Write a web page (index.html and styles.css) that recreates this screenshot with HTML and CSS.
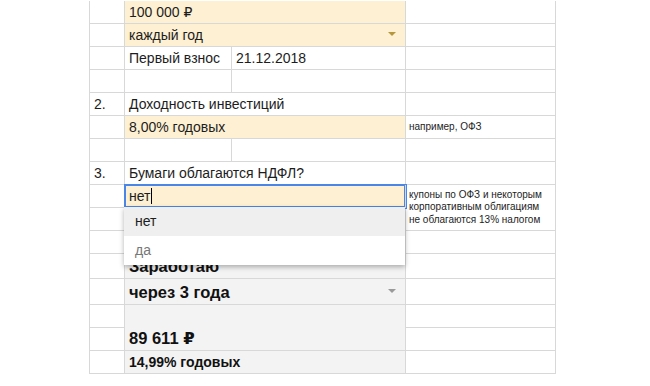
FILE: index.html
```html
<!DOCTYPE html>
<html>

<head>
    <meta charset="utf-8">
    <title>Калькулятор</title>
    <meta name="viewport" content="width=device-width, initial-scale=1">
    <link rel="stylesheet" href="styles.css">
</head>

<body>
    <section class="sheet">
        <!-- 1. взнос -->
        <div class="cell"></div>
        <div class="cell wide input">100 000 ₽</div>
        <div class="cell"></div>

        <div class="cell"></div>
        <div class="cell wide input">каждый год<span class="arrow"></span></div>
        <div class="cell"></div>

        <div class="cell"></div>
        <div class="cell">Первый взнос</div>
        <div class="cell">21.12.2018</div>
        <div class="cell"></div>

        <div class="cell"></div>
        <div class="cell"></div>
        <div class="cell"></div>
        <div class="cell"></div>

        <!-- 2. доходность -->
        <div class="cell">2.</div>
        <div class="cell wide">Доходность инвестиций</div>
        <div class="cell"></div>

        <div class="cell"></div>
        <div class="cell wide input">8,00% годовых</div>
        <div class="cell note">например, ОФЗ</div>

        <div class="cell"></div>
        <div class="cell"></div>
        <div class="cell"></div>
        <div class="cell"></div>

        <!-- 3. НДФЛ -->
        <div class="cell">3.</div>
        <div class="cell wide">Бумаги облагаются НДФЛ?</div>
        <div class="cell"></div>

        <div class="cell"></div>
        <div class="cell wide input editing"><span class="caret">нет</span></div>
        <div class="cell note tall">купоны по ОФЗ и некоторым корпоративным облигациям не облагаются 13% налогом</div>

        <div class="cell"></div>
        <div class="cell"></div>
        <div class="cell"></div>

        <div class="cell"></div>
        <div class="cell"></div>
        <div class="cell"></div>
        <div class="cell"></div>

        <!-- итог -->
        <div class="cell"></div>
        <div class="cell wide result big">Заработаю</div>
        <div class="cell"></div>

        <div class="cell"></div>
        <div class="cell wide result big">через 3 года<span class="arrow gray"></span></div>
        <div class="cell"></div>

        <div class="cell"></div>
        <div class="cell wide tall result big">89 611 ₽</div>
        <div class="cell"></div>
        <div class="cell"></div>
        <div class="cell"></div>

        <div class="cell"></div>
        <div class="cell wide result">14,99% годовых</div>
        <div class="cell"></div>

        <ul class="dropdown">
            <li class="hover">нет</li>
            <li class="muted">да</li>
        </ul>
    </section>
</body>

</html>
```

FILE: styles.css
```css
body {
    margin: 0;
    width: 650px;
    height: 386px;
    overflow: hidden;
    background-color: #fff;
    font-family: "Liberation Sans", "DejaVu Sans", Arial, sans-serif;
    color: #1d1d1d;
}

.sheet {
    position: relative;
    display: grid;
    grid-template-columns: 35px 107px 174px 150px;
    grid-template-rows: repeat(11, 23px) 25px 26px 23px 23px 23px;
    width: max-content;
    margin: 1px 0 0 89px;
    border-left: 1px solid #d8d8d8;
}

.cell {
    display: flex;
    align-items: flex-end;
    box-sizing: border-box;
    padding: 0 3px 3px 4px;
    border-right: 1px solid #d8d8d8;
    border-bottom: 1px solid #d8d8d8;
    font-size: 14px;
    white-space: nowrap;
}

.wide {
    grid-column: span 2;
}

.tall {
    grid-row: span 2;
}

.input {
    background-color: #fdf0d3;
}

.editing {
    position: relative;
    z-index: 1;
    box-shadow: 0 0 0 1px #4a86e8, inset 0 0 0 1px #4a86e8;
}

.caret {
    padding-right: 1px;
    border-right: 1px solid #000;
}

.note {
    align-items: center;
    padding: 0 2px 0 3px;
    font-size: 10px;
    line-height: 12.5px;
    white-space: normal;
}

.result {
    background-color: #f3f3f3;
    font-weight: bold;
    color: #111;
}

.big {
    font-size: 16.5px;
    padding-bottom: 2px;
}

.arrow {
    align-self: center;
    margin-left: auto;
    margin-right: 6px;
    border-left: 4px solid transparent;
    border-right: 4px solid transparent;
    border-top: 4px solid #b8963e;
}

.arrow.gray {
    border-top-color: #9a9a9a;
}

.dropdown {
    position: absolute;
    z-index: 2;
    top: 206px;
    left: 34px;
    width: 281px;
    margin: 0;
    padding: 0;
    list-style: none;
    background-color: #fff;
    box-shadow: 0 2px 5px rgba(0, 0, 0, 0.3);
    font-size: 14px;
}

.dropdown li {
    height: 29px;
    line-height: 29px;
    padding-left: 11px;
}

.dropdown .hover {
    background-color: #efefef;
}

.dropdown .muted {
    color: #777;
}
```
